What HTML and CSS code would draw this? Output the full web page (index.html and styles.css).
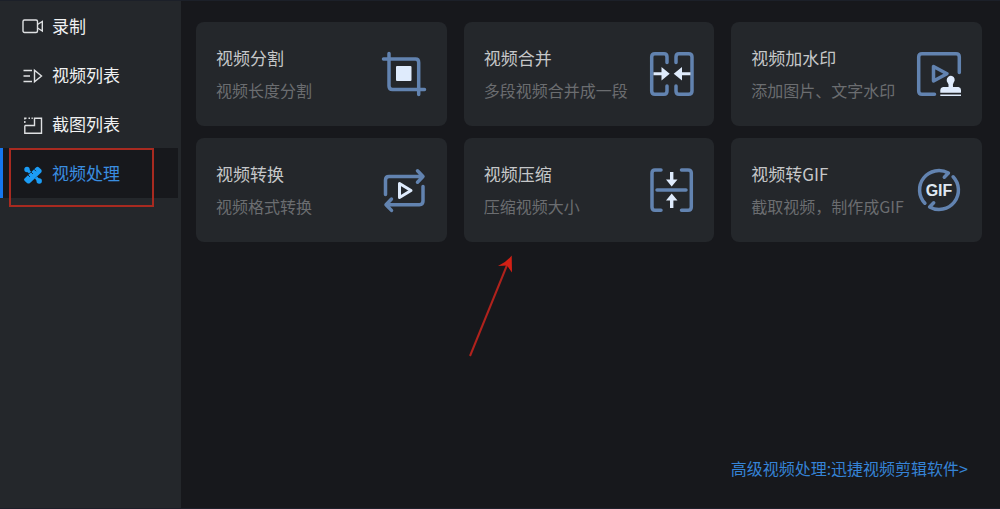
FILE: index.html
```html
<!DOCTYPE html>
<html lang="zh-CN">
<head>
<meta charset="utf-8">
<title>视频处理</title>
<link rel="stylesheet" href="styles.css">
</head>
<body>
<div class="app">
  <nav class="sidebar">
    <button class="nav-item" type="button">
      <svg class="nav-icon" viewBox="0 0 24 24"><rect x="1" y="6" width="14.5" height="12.5" rx="1.5"/><path d="M15.5 10.5 20.3 7.5V17L15.5 14"/></svg>
      录制
    </button>
    <button class="nav-item" type="button">
      <svg class="nav-icon" viewBox="0 0 24 24"><path d="M1.5 7.5H10M1.5 13H8M1.5 18.5H10M12.5 7.2V18.8L19.5 13Z"/></svg>
      视频列表
    </button>
    <button class="nav-item" type="button">
      <svg class="nav-icon" viewBox="0 0 24 24"><path d="M2.8 13.5V21.3H19.5V6.2H12.5V13.5H2.8M2.8 11V9M2.8 7.5V6.2H4.5M6.5 6.2H8M9.5 6.2H10.8"/></svg>
      截图列表
    </button>
    <button class="nav-item active" type="button" aria-current="page">
      <svg class="nav-icon tools" viewBox="0 0 24 24"><path class="fill" d="M2.5 17.500 14 6.500Q15.500 5 17 6.500L19.200 8.500Q20.400 10 19.200 11.500L8 22Q6.500 23.200 5 22L2.500 19.800Q1.500 18.500 2.500 17.500Z"/><circle class="fill" cx="5" cy="8.500" r="2.700"/><circle class="fill" cx="17.200" cy="20" r="2.700"/><path class="link" d="M5 8.500 8 11.500M14 16.500 17 20"/><path class="marks" d="M9 11 11 13M12 8.200 14 10.200M6 14 8 16"/></svg>
      视频处理
    </button>
    <span class="highlight"></span>
  </nav>

  <main class="main">
    <div class="cards">
      <button class="card" type="button">
        <span class="text"><span class="title">视频分割</span><span class="desc">视频长度分割</span></span>
        <svg class="icon" viewBox="0 0 48 48"><path d="M9 3.500V36Q9 39.500 12.500 39.500H44.500M3.500 9H35.500Q38.700 9 38.700 12.500V44.500"/><rect class="solid" x="16" y="16" width="15.500" height="15" rx="1"/></svg>
      </button>
      <button class="card" type="button">
        <span class="text"><span class="title">视频合并</span><span class="desc">多段视频合并成一段</span></span>
        <svg class="icon" viewBox="0 0 48 48"><path d="M20 12.500V7Q20 3.800 17 3.800H8Q4.700 3.800 4.700 7V41Q4.700 44.300 8 44.300H17Q20 44.300 20 41V36M29 12.500V7Q29 3.800 32 3.800H41.500Q45 3.800 45 7V41Q45 44.300 41.500 44.300H32Q29 44.300 29 41V36"/><path class="solid" d="M6.500 22.300H14.500V17L22.700 23.700 14.500 30.500V25.200H6.500ZM43.500 22.300H35V17L26.700 23.700 35 30.500V25.200H43.500Z"/></svg>
      </button>
      <button class="card" type="button">
        <span class="text"><span class="title">视频加水印</span><span class="desc">添加图片、文字水印</span></span>
        <svg class="icon" viewBox="0 0 48 48"><path d="M44.300 22.500V7Q44.300 3.800 41 3.800H7Q3.700 3.800 3.700 7V41Q3.700 44.300 7 44.300H19.500"/><path d="M18.500 16.500V31L32 23.700Z"/><path class="solid" d="M31.700 30A4 4 0 1 1 38.700 32.500Q37.500 34 38 37H43.500Q46 37.500 46 40V42.700H25.300V40Q25.300 37.500 28 37H33.500Q34 34 32.500 32.500Q31.700 31.500 31.700 30ZM25.300 44.500H46V46H25.300Z"/></svg>
      </button>
      <button class="card" type="button">
        <span class="text"><span class="title">视频转换</span><span class="desc">视频格式转换</span></span>
        <svg class="icon" viewBox="0 0 48 48"><path d="M5.500 28.500V14Q5.500 10.500 9 10.500H43M37.500 4.800 43 10.500 37.500 16.200M43 20.500V35Q43 38.700 39.500 38.700H6M11.500 33 6 38.700 11.500 44.400"/><path class="play" d="M19.500 17.500V31.500L31 24.500Z"/></svg>
      </button>
      <button class="card" type="button">
        <span class="text"><span class="title">视频压缩</span><span class="desc">压缩视频大小</span></span>
        <svg class="icon" viewBox="0 0 48 48"><path d="M14 4H8Q5 4 5 7V41Q5 44.300 8 44.300H14M34.500 4H41Q44.300 4 44.300 7V41Q44.300 44.300 41 44.300H34.500M10 24H39"/><path class="solid" d="M23 6H26.400V13.500H30.500L24.700 20.500 19 13.500H23ZM23 42H26.400V34.500H30.500L24.700 27.500 19 34.500H23Z"/></svg>
      </button>
      <button class="card" type="button">
        <span class="text"><span class="title">视频转GIF</span><span class="desc">截取视频，制作成GIF</span></span>
        <svg class="icon" viewBox="0 0 48 48"><path d="M9.900 37.200A19.300 19.300 0 0 1 33.400 7.100L29.300 11.200M38.100 10.800A19.300 19.300 0 0 1 14.600 40.900L18.700 36.800"/><text class="gif" x="24" y="30" text-anchor="middle">GIF</text></svg>
      </button>
    </div>
    <a class="more" href="#">高级视频处理:迅捷视频剪辑软件&gt;</a>
  </main>

  <svg class="pointer" viewBox="0 0 50 110"><path class="shaft" d="M5 106 42.500 14"/><path class="head" d="M46.700 5.500 47 22.500 42 15.500 33 16Q41 12.500 46.700 5.500Z"/></svg>
</div>
</body>
</html>
```

FILE: styles.css
```css
* {
  box-sizing: border-box;
}

body {
  margin: 0;
  background: #17181c;
  font-family: "Noto Sans CJK SC", sans-serif;
}

button {
  border: 0;
  font-family: inherit;
  text-align: left;
  cursor: pointer;
}

.app {
  position: relative;
  display: flex;
  min-height: 100vh;
  border-top: 1px solid #1c2029;
  border-bottom: 1px solid #1e1f2a;
}

.sidebar {
  position: relative;
  flex: 0 0 181px;
  padding-right: 3px;
  background: #24272b;
}

.nav-item {
  display: flex;
  align-items: center;
  gap: 6px;
  width: 100%;
  height: 49px;
  padding: 0 0 0 22px;
  background: none;
  color: #f0f1f2;
  font-size: 17px;
  line-height: 24px;
}

.nav-item.active {
  height: 50px;
  background: #17181c;
  box-shadow: inset 3px 0 #1677f0;
  color: #3a8ee0;
}

.nav-icon {
  width: 24px;
  height: 24px;
  fill: none;
  stroke: #dfe1e3;
  stroke-width: 1.4;
}

.tools .fill {
  fill: #1b9cf5;
  stroke: none;
}

.tools .link {
  stroke: #1b9cf5;
  stroke-width: 3;
}

.tools .marks {
  stroke: #17304a;
  stroke-width: 1;
}

.highlight {
  position: absolute;
  top: 147px;
  left: 9px;
  width: 145px;
  height: 59px;
  border: 2px solid #a82a20;
  pointer-events: none;
}

.main {
  flex: 1;
  display: flex;
  flex-direction: column;
  padding: 21px 18px 28px 15px;
}

.cards {
  display: grid;
  grid-template-columns: repeat(3, 1fr);
  gap: 12px 17px;
}

.card {
  display: flex;
  align-items: center;
  justify-content: space-between;
  height: 104px;
  padding: 0 19px 0 20px;
  border-radius: 8px;
  background: #24272b;
}

.text {
  display: flex;
  flex-direction: column;
  gap: 8px;
  white-space: nowrap;
}

.title {
  color: #c6c7c9;
  font-size: 17px;
  line-height: 24px;
}

.desc {
  color: #6b6d70;
  font-size: 16px;
  line-height: 24px;
}

.icon {
  flex: none;
  width: 48px;
  height: 48px;
  margin-left: -20px;
  fill: none;
  stroke: #6283b0;
  stroke-width: 3.5;
  stroke-linecap: round;
  stroke-linejoin: round;
}

.icon .solid {
  fill: #dfebfc;
  stroke: none;
}

.icon .play {
  stroke: #dfebfc;
  stroke-width: 3;
}

.icon .gif {
  fill: #dfe7f2;
  stroke: none;
  font: bold 16px "Liberation Sans", sans-serif;
}

.more {
  align-self: flex-end;
  margin-top: auto;
  margin-right: 14px;
  color: #3583d6;
  font-size: 16px;
  line-height: 24px;
  text-decoration: none;
}

.pointer {
  position: absolute;
  top: 249px;
  left: 465px;
  width: 50px;
  height: 110px;
  pointer-events: none;
}

.shaft {
  fill: none;
  stroke: #b0221c;
  stroke-width: 2;
}

.head {
  fill: #d32015;
}
```
